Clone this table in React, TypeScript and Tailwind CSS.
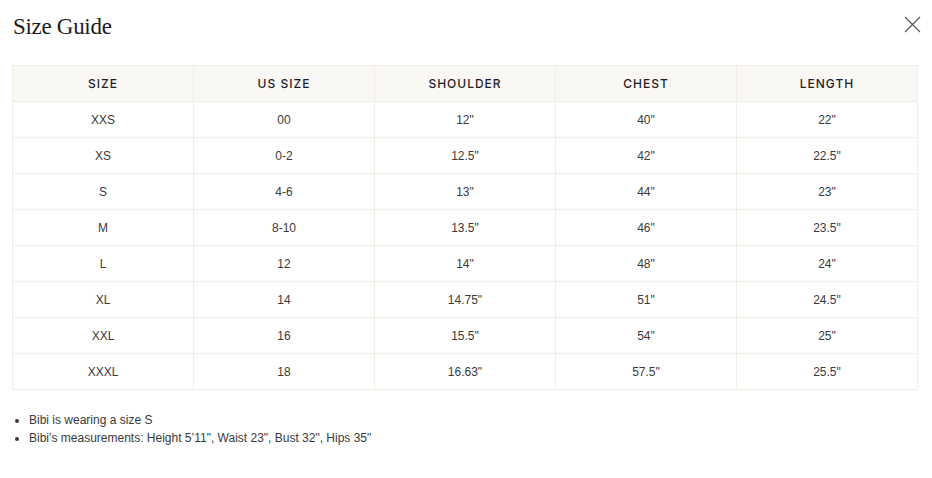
const rows = [
  ["XXS", "00", "12\"", "40\"", "22\""],
  ["XS", "0-2", "12.5\"", "42\"", "22.5\""],
  ["S", "4-6", "13\"", "44\"", "23\""],
  ["M", "8-10", "13.5\"", "46\"", "23.5\""],
  ["L", "12", "14\"", "48\"", "24\""],
  ["XL", "14", "14.75\"", "51\"", "24.5\""],
  ["XXL", "16", "15.5\"", "54\"", "25\""],
  ["XXXL", "18", "16.63\"", "57.5\"", "25.5\""],
];

const headers = ["SIZE", "US SIZE", "SHOULDER", "CHEST", "LENGTH"];

export default function App() {
  return (
    <div className="w-[932px] h-[478px] bg-white px-3 font-['Liberation_Sans',Arial,sans-serif] text-[#333]">
      <div className="flex items-center justify-between h-[55px]">
        <h2 className="font-['Liberation_Serif',serif] text-[23px] text-[#1c1c1c] tracking-[-0.3px] pl-[1px]">Size Guide</h2>
        <button className="mr-[-1px] mt-[-6px] text-[#555]">
          <svg width="17" height="17" viewBox="0 0 17 17" fill="none" stroke="currentColor" strokeWidth="1.2">
            <path d="M1 1L16 16M16 1L1 16" />
          </svg>
        </button>
      </div>
      <div className="mt-[10px]">
        <table className="w-[906px] border-collapse table-fixed text-[12px]">
          <thead>
            <tr className="bg-[#f9f8f4] h-[36px]">
              {headers.map((h) => (
                <th key={h} className="border border-[#f0ede3] font-['Inter',sans-serif] font-medium text-[12px] tracking-[1px] text-[#1e1e2a] text-center">
                  {h}
                </th>
              ))}
            </tr>
          </thead>
          <tbody>
            {rows.map((r) => (
              <tr key={r[0]} className="h-[36px]">
                {r.map((c, i) => (
                  <td key={i} className="border border-[#f0ede3] text-center text-[#3a3a3a]">
                    {c}
                  </td>
                ))}
              </tr>
            ))}
          </tbody>
        </table>
      </div>
      <ul className="mt-[21px] text-[12px] text-[#3a3a3a] leading-[18px] list-disc pl-[17px]">
        <li>Bibi is wearing a size S</li>
        <li>Bibi’s measurements: Height 5’11", Waist 23", Bust 32", Hips 35"</li>
      </ul>
    </div>
  );
}
